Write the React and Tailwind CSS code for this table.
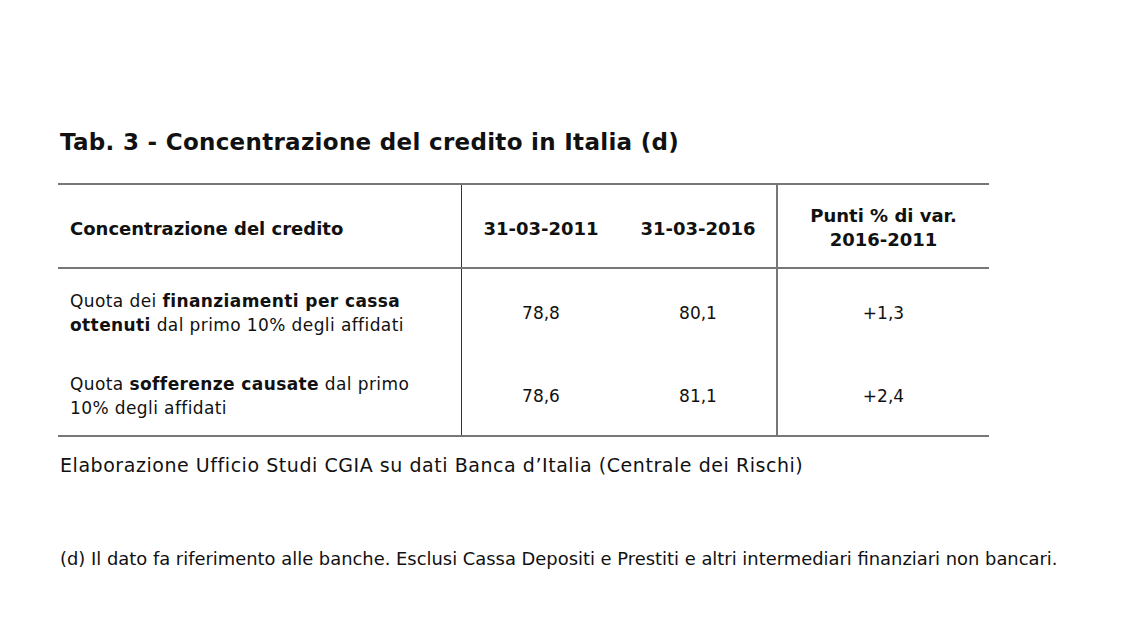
export default function App() {
  return (
    <div className="w-[1136px] h-[640px] bg-white text-[#111]" style={{ fontFamily: '"DejaVu Sans", Verdana, sans-serif' }}>
      <div className="pl-[58px] pt-[127px]">
        <h1 className="pl-[2px] text-[23px] leading-[30px] font-bold tracking-[0.3px]">
          Tab. 3 - Concentrazione del credito in Italia (d)
        </h1>
        <div className="mt-[26px] w-[931px] border-t-2 border-b-2 border-[#777]">
          <div className="grid grid-cols-[404px_158px_158px_211px] border-b-2 border-[#777] h-[84px] text-[18px] font-bold">
            <div className="flex items-center pl-[12px] pt-[5px] border-r border-[#333]">Concentrazione del credito</div>
            <div className="flex items-center justify-center pt-[5px]">31-03-2011</div>
            <div className="flex items-center justify-center pt-[5px] border-r-2 border-[#777]">31-03-2016</div>
            <div className="flex flex-col items-center justify-center pt-[4px] leading-[24px]">
              <span>Punti % di var.</span>
              <span>2016-2011</span>
            </div>
          </div>
          <div className="grid grid-cols-[404px_158px_158px_211px] text-[17px] leading-[24px]">
            <div className="flex flex-col border-r border-[#333] pl-[12px] tracking-[0.4px]">
              <div className="h-[84px] flex items-center pt-[3px]">
                <span>Quota dei <b>finanziamenti per cassa ottenuti</b> dal primo 10% degli affidati</span>
              </div>
              <div className="h-[82px] flex items-center pt-[3px] pr-[50px]">
                <span>Quota <b>sofferenze causate</b> dal primo 10% degli affidati</span>
              </div>
            </div>
            <div className="flex flex-col">
              <div className="h-[84px] flex items-center justify-center pt-[3px]">78,8</div>
              <div className="h-[82px] flex items-center justify-center pt-[3px]">78,6</div>
            </div>
            <div className="flex flex-col border-r-2 border-[#777]">
              <div className="h-[84px] flex items-center justify-center pt-[3px]">80,1</div>
              <div className="h-[82px] flex items-center justify-center pt-[3px]">81,1</div>
            </div>
            <div className="flex flex-col">
              <div className="h-[84px] flex items-center justify-center pt-[3px]">+1,3</div>
              <div className="h-[82px] flex items-center justify-center pt-[3px]">+2,4</div>
            </div>
          </div>
        </div>
        <p className="pl-[2px] mt-[16px] text-[19px] leading-[24px] tracking-[0.55px]">
          Elaborazione Ufficio Studi CGIA su dati Banca d’Italia (Centrale dei Rischi)
        </p>
        <p className="pl-[2px] mt-[70px] text-[17.9px] leading-[24px]">
          (d) Il dato fa riferimento alle banche. Esclusi Cassa Depositi e Prestiti e altri intermediari finanziari non bancari.
        </p>
      </div>
    </div>
  );
}
